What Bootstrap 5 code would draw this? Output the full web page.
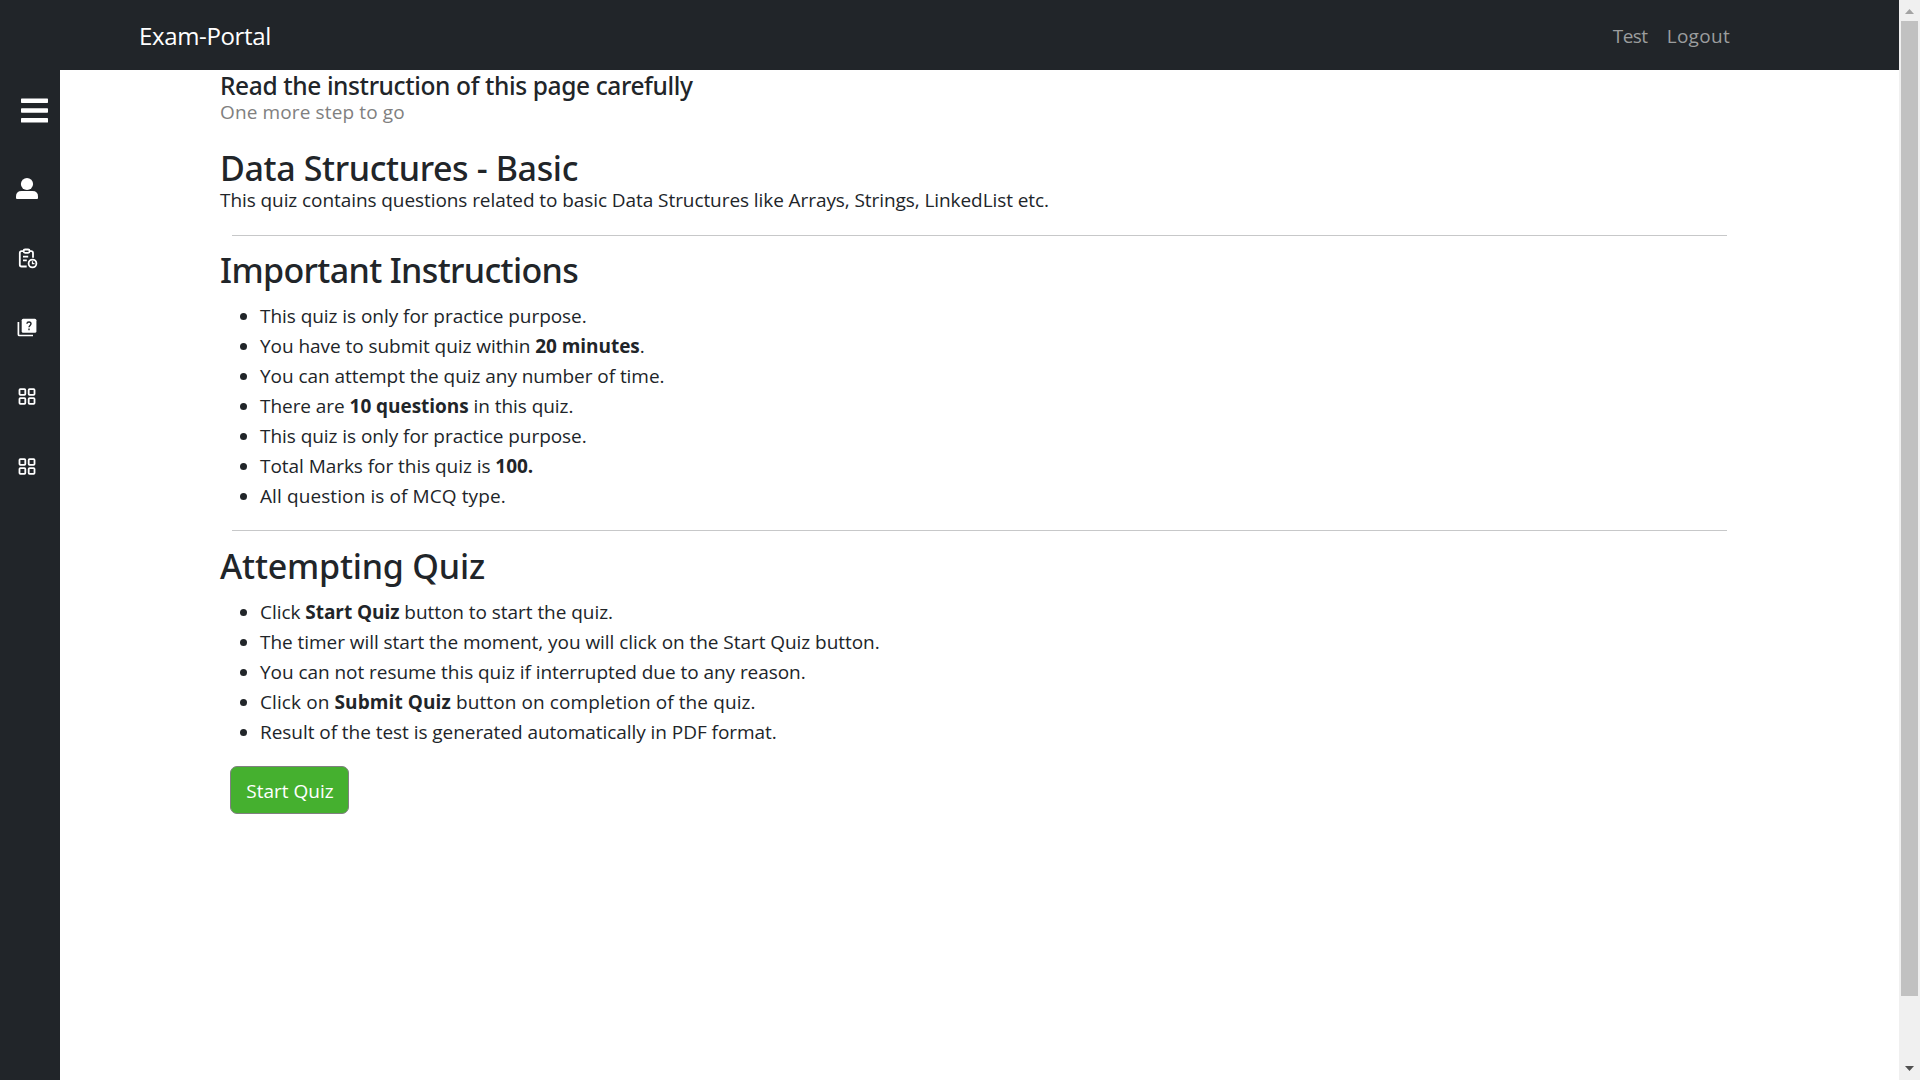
<!DOCTYPE html>
<html lang="en">
<head>
<meta charset="utf-8">
<meta name="viewport" content="width=device-width, initial-scale=1">
<title>Exam-Portal</title>
<link href="https://cdn.jsdelivr.net/npm/bootstrap@5.3.0/dist/css/bootstrap.min.css" rel="stylesheet">
<style>
body{font-family:"Open Sans","Noto Sans",sans-serif;font-size:19px;line-height:30px;color:#212529;letter-spacing:-.05px;overflow:hidden}
.portal-nav{height:70px;padding:0 161px 0 139px}
.portal-nav .navbar-brand{font-size:24px;letter-spacing:-.35px;line-height:38px;padding:2px 0 0;margin:0}
.portal-nav .nav-link{padding-top:2px;padding-bottom:0;color:#9b9d9e;line-height:30px}
.link-test{width:54px;letter-spacing:-.5px}
.link-logout{letter-spacing:.3px}
.side-menu{width:60px;background:#212529}
.side-menu svg{display:block;width:60px;height:70px;fill:#fff}
.side-menu .line-icon{fill:none;stroke:#fff;stroke-width:1.8}
.side-menu .tall-cell{height:83px}
.page-body{padding-left:160px;padding-right:160px}
.page-body h4,.page-body h2{font-family:"Noto Sans","Open Sans",sans-serif;font-weight:500;margin:0}
.page-body h4{font-size:24.5px;line-height:31px;letter-spacing:-.38px}
.step-note{color:gray;line-height:22px;letter-spacing:.13px;margin-bottom:23px}
.page-body h2{font-size:34px;line-height:42px;letter-spacing:-.64px}
.page-body .title-quiz{padding-top:2px;line-height:40px;letter-spacing:-.37px}
.about-quiz{line-height:24px;letter-spacing:-.077px;margin:0}
.page-body hr{margin:0 12px;border:0;height:1px;background:#c7c8c9;opacity:1}
.page-body .rule-about{margin-top:23px}
.page-body .title-rules{margin-top:13px}
.page-body .title-attempt{margin-top:14px;letter-spacing:-.2px}
.rule-list{padding-left:40px;margin:10px 0 19px}
.rule-list .spaced{letter-spacing:.1px}
.btn-start{background:#45b02f;border:1px solid gray;color:#fff;font-size:19px;width:119px;height:48px;line-height:30px;border-radius:7px;padding:9px 0 7px 1px;margin-left:10px}
.scroll-rail{width:21px;background:#f0f0f0}
.scroll-rail svg{display:block;width:21px;height:21px}
.scroll-thumb{width:17px;height:975px;background:#c1c1c1;margin-left:2px}
</style>
<script src="https://cdn.jsdelivr.net/npm/bootstrap@5.3.0/dist/js/bootstrap.bundle.min.js"></script>
</head>
<body>
<div class="d-flex vh-100">
  <div class="d-flex flex-column flex-grow-1">
    <nav class="portal-nav navbar navbar-expand navbar-dark bg-dark flex-shrink-0">
      <a class="navbar-brand" href="#">Exam-Portal</a>
      <div class="navbar-nav ms-auto">
        <a class="nav-link link-test" href="#">Test</a>
        <a class="nav-link link-logout" href="#">Logout</a>
      </div>
    </nav>
    <div class="d-flex flex-grow-1">
      <aside class="side-menu flex-shrink-0">
        <svg class="tall-cell" viewBox="0 70 60 83"><rect x="21" y="98.6" width="27" height="4.4" rx=".7"/><rect x="21" y="108.2" width="27" height="4.6" rx=".7"/><rect x="21" y="118" width="27" height="4.6" rx=".7"/></svg>
        <svg viewBox="0 153 60 70"><circle cx="27" cy="184" r="6.1"/><path d="M16 198v-1.500Q16 191 21.500 191h11Q38 191 38 196.500V198q0 1-1 1H17q-1 0-1-1z"/></svg>
        <svg class="line-icon" viewBox="0 223 60 70"><path d="M23.300 251.200h-1.800a1.700 1.700 0 0 0-1.700 1.700v11.900a1.700 1.700 0 0 0 1.700 1.700h5.200M29.800 251.200h1.500a1.700 1.700 0 0 1 1.700 1.700v4.900M23 256.700h5.200M23 260.400h3.800"/><rect x="23.600" y="249.500" width="6" height="3.300" rx="1.500"/><circle cx="32.500" cy="263.500" r="3.900"/><path d="M32.500 261.300v2.300h2" stroke-width="1.300"/></svg>
        <svg viewBox="0 293 60 70"><rect x="21.700" y="318.700" width="14.700" height="14" rx="1.500"/><path d="M18.400 322v12.500q0 1 1 1H33" fill="none" stroke="#fff" stroke-width="1.700"/><path d="M26.900 323.800c.2-2.500 4.100-2.300 4.100 0 0 1.600-2 1.700-2 3.500M29 328.600v1.600" fill="none" stroke="#212529" stroke-width="1.400"/></svg>
        <svg class="line-icon" viewBox="0 363 60 70"><rect x="19.500" y="389.100" width="5.800" height="5.800" rx=".8"/><rect x="28.700" y="389.100" width="5.800" height="5.800" rx=".8"/><rect x="19.500" y="398.100" width="5.800" height="5.800" rx=".8"/><rect x="28.700" y="398.100" width="5.800" height="5.800" rx=".8"/></svg>
        <svg class="line-icon" viewBox="0 363 60 70"><rect x="19.500" y="389.100" width="5.800" height="5.800" rx=".8"/><rect x="28.700" y="389.100" width="5.800" height="5.800" rx=".8"/><rect x="19.500" y="398.100" width="5.800" height="5.800" rx=".8"/><rect x="28.700" y="398.100" width="5.800" height="5.800" rx=".8"/></svg>
      </aside>
      <main class="page-body flex-grow-1">
        <h4>Read the instruction of this page carefully</h4>
        <p class="step-note">One more step to go</p>
        <h2 class="title-quiz">Data Structures - Basic</h2>
        <p class="about-quiz">This quiz contains questions related to basic Data Structures like Arrays, Strings, LinkedList etc.</p>
        <hr class="rule-about">
        <h2 class="title-rules">Important Instructions</h2>
        <ul class="rule-list">
          <li>This quiz is only for practice purpose.</li>
          <li>You have to submit quiz within <b>20 minutes</b>.</li>
          <li>You can attempt the quiz any number of time.</li>
          <li>There are <b>10 questions</b> in this quiz.</li>
          <li>This quiz is only for practice purpose.</li>
          <li>Total Marks for this quiz is <b>100.</b></li>
          <li class="spaced">All question is of MCQ type.</li>
        </ul>
        <hr>
        <h2 class="title-attempt">Attempting Quiz</h2>
        <ul class="rule-list">
          <li>Click <b>Start Quiz</b> button to start the quiz.</li>
          <li>The timer will start the moment, you will click on the Start Quiz button.</li>
          <li>You can not resume this quiz if interrupted due to any reason.</li>
          <li class="spaced">Click on <b>Submit Quiz</b> button on completion of the quiz.</li>
          <li>Result of the test is generated automatically in PDF format.</li>
        </ul>
        <button type="button" class="btn btn-start">Start Quiz</button>
      </main>
    </div>
  </div>
  <div class="scroll-rail d-flex flex-column flex-shrink-0">
    <svg viewBox="0 0 21 21"><path d="M6 14h9L10.500 9z" fill="#a3a3a3"/></svg>
    <div class="scroll-thumb"></div>
    <svg class="mt-auto" viewBox="0 0 21 21"><path d="M6 7h9l-4.500 5z" fill="#505050"/></svg>
  </div>
</div>
</body>
</html>
